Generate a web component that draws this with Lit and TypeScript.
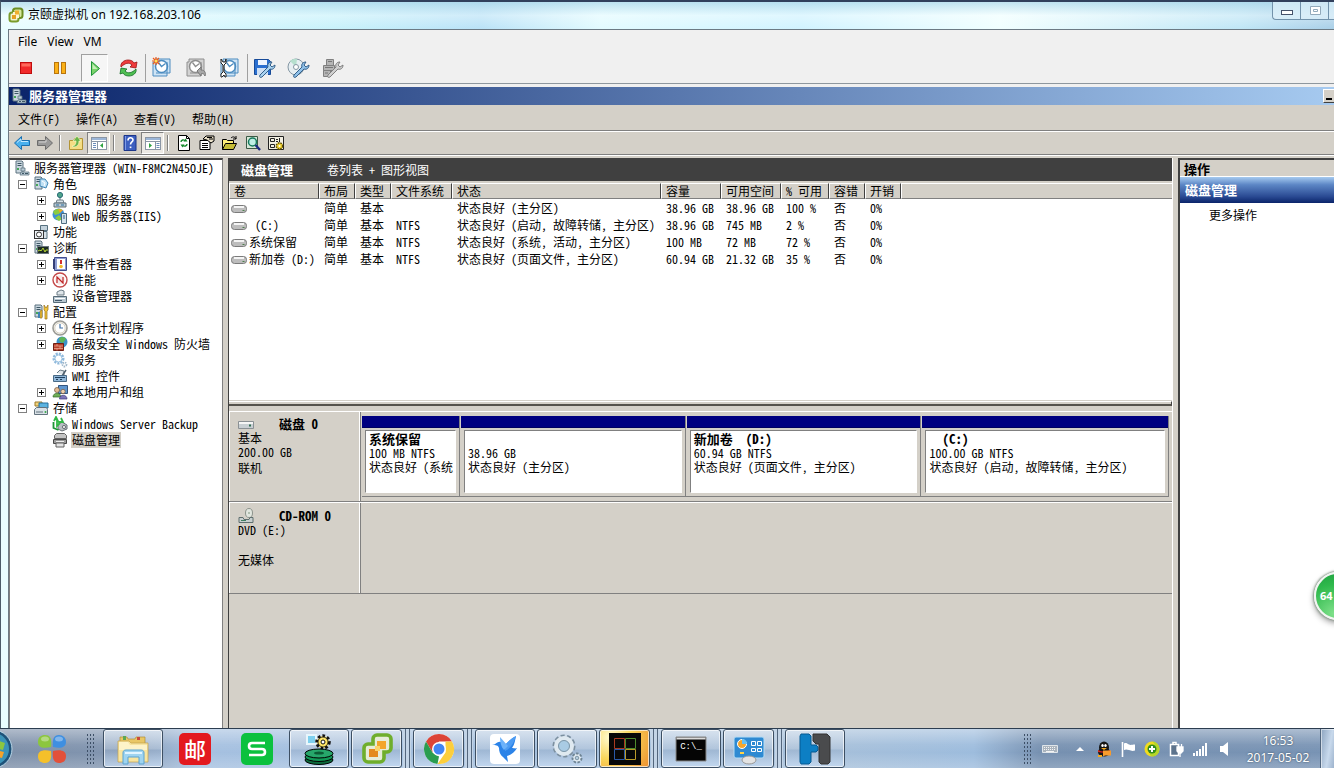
import { LitElement, html, css, svg, nothing, type TemplateResult } from "lit";
import { customElement, property } from "lit/decorators.js";
import { classMap } from "lit/directives/class-map.js";
import { styleMap } from "lit/directives/style-map.js";

/* ---------- icon library: [viewBox size, drawing] ---------- */
const serverTower = svg`<path d="M2 1h6l1 1v11H2z" fill="#c9d6de" stroke="#5d7380"/><path d="M3.500 3.500h4M3.500 5.500h4" stroke="#3f5866"/><rect x="3" y="8" width="2" height="2" fill="#46a758"/>`;
const vmSnap = (c: string, f: string) => svg`<path d="M5 3h15v14h-3v3H3V6h2z" fill="${f}" stroke="${c}"/><circle cx="11.500" cy="10.500" r="6" fill="#fff" stroke="${c}" stroke-width="1.500"/><path d="M8.500 6.500l3 4 4-3" stroke="${c}" stroke-width="1.300" fill="none"/><path d="M17 6v11M6 17h11" stroke="${c}"/>`;
const wrench = (c: string, f: string) => svg`<path d="M8 19l8-8c-1-3 1-5 4-5l-2 3 2 2 3-2c0 3-2 5-5 4l-8 8c-2 1-3 0-2-2z" fill="${f}" stroke="${c}"/>`;

const icons: Record<string, [number, TemplateResult]> = {
  vmware: [16, svg`<rect x="5" y="1.500" width="9.500" height="9.500" rx="2.500" fill="#d7e8a0" stroke="#6c8e23" stroke-width="2"/><rect x="1.500" y="5.500" width="9" height="9" rx="2.500" fill="#eef3cf" stroke="#7b9c2c" stroke-width="2"/><path d="M5 5h6v6H5z" fill="#fff5d0"/><path d="M7 3.500h4v4H7z" fill="#efae2e"/><path d="M4 8h4v4H4z" fill="#e5a023"/>`],
  stop: [24, svg`<rect x="6.500" y="6.500" width="11" height="11" fill="#f12a2a" stroke="#c00d0d"/><path d="M7.500 7.500h9v3h-9z" fill="#ff6a5c"/>`],
  pause: [24, svg`<rect x="6.500" y="6.500" width="4" height="11" fill="#fbb117" stroke="#b8740c"/><rect x="13.500" y="6.500" width="4" height="11" fill="#fbb117" stroke="#b8740c"/>`],
  play: [24, svg`<path d="M8.500 5.500v14l8-7z" fill="#7ad36b" stroke="#1d9436"/><path d="M9.500 8v5h5z" fill="#c5f0b8"/>`],
  reset: [24, svg`<path d="M5 11c-1-4 3-7 7-7 3 0 5 1 6 3l3-1-1 6-6-1 2-2c-3-3-7-2-11 2z" fill="#ef3b3b" stroke="#9c1414" stroke-width=".8"/><path d="M20 13c1 4-3 7-7 7-3 0-5-1-6-3l-3 1 1-6 6 1-2 2c3 3 7 2 11-2z" fill="#4fbf52" stroke="#136d24" stroke-width=".8"/>`],
  snapTake: [24, svg`${vmSnap("#4c8cc0", "#cfe4f5")}<path d="M6 1v8M2 5h8M3 2l6 6M9 2L3 8" stroke="#f05a1a" stroke-width="1.200"/><circle cx="6" cy="5" r="1.500" fill="#ffe25a"/>`],
  snapRevert: [24, svg`${vmSnap("#8e8e8e", "#d3d3d3")}<path d="M13 15l4-4v3c4 0 5 3 4 6-1-2-2-3-4-2v2z" fill="#a8a8a8" stroke="#777"/>`],
  snapManage: [24, svg`${vmSnap("#4c8cc0", "#cfe4f5")}<path d="M3 3v4l2 2v7l-2 2v3h1l2-2 1 2h1v-3l-2-2V9l2-2V3L7 6H5z" fill="#fff" stroke="#222"/>`],
  floppy: [24, svg`<path d="M2.500 3.500h14l2 2v13h-16z" fill="#2a6fd0" stroke="#174a98"/><path d="M6 4h9v5H6z" fill="#eef5ff"/><path d="M5 12h11v7H5z" fill="#cfe0f4"/>${wrench("#34608a", "#a9d2f0")}`],
  disc: [24, svg`<circle cx="10" cy="11" r="8" fill="#e6eef2" stroke="#8496a3"/><path d="M10 11L4 5a8 8 0 0 1 7-2z" fill="#b6dfce"/><circle cx="10" cy="11" r="2.500" fill="#fff" stroke="#8496a3"/>${wrench("#34608a", "#8fc0e8")}`],
  device: [24, svg`<path d="M6.500 3.500h7v6h-7zM3.500 9.500h11v5h-11zM3.500 14.500h7v6h-7z" fill="#b5b5b5" stroke="#808080"/><path d="M8 5.500h4M5 11.500h8M5 17h3" stroke="#777"/>${wrench("#808080", "#d0d0d0")}`],
  server: [16, svg`${serverTower}<path d="M7 8h4v3H7zM7 12h8v3H6z" fill="#b9cbd6" stroke="#5d7380" stroke-width=".8"/><path d="M8 13.500h2M11 13.500h3" stroke="#3f5866"/>`],
  roles: [16, svg`${serverTower}<path d="M7 3h5l3 4-2 5-6-2z" fill="#bfe0f4" stroke="#3f86b5"/><path d="M9 5l3 2-1 3" stroke="#fff" fill="none"/>`],
  dns: [16, svg`<circle cx="8" cy="3" r="2.600" fill="#4fa58b" stroke="#2b6d77"/><path d="M8 6v4" stroke="#467" /><path d="M5 8h6l1 3H4z" fill="#d6e1e7" stroke="#71828c"/><path d="M2 11h12v4H2z" fill="#b8c9d3" stroke="#5b6c77"/><path d="M4 13h3M9 13h3" stroke="#2d6e9f"/>`],
  web: [16, svg`<circle cx="6.500" cy="6.500" r="6" fill="#3c8fd6"/><path d="M1 4c2-4 8-4 9-2L7 6 3 7zM3 10l4-3 3 4-3 2z" fill="#8ccb3f"/><path d="M6 1l5 1-3 3z" fill="#f5a623"/><path d="M9.500 5.500h5v10h-5z" fill="#d3e1ea" stroke="#4c6b80"/><path d="M11 8h2M11 10h2" stroke="#28638c"/>`],
  feature: [16, svg`<path d="M7.500 1.500h7v5h-7z" fill="#c3d2dc" stroke="#56707f"/><path d="M8 7.500h6v7H8z" fill="#d8e2e8" stroke="#56707f"/><rect x="1.500" y="6.500" width="9" height="8" fill="#eef3f6" stroke="#333"/><circle cx="6" cy="10.500" r="2.500" fill="#fff" stroke="#333"/>`],
  diag: [16, svg`${serverTower}<rect x="4.500" y="6.500" width="11" height="7" fill="#1c2b22" stroke="#69757c"/><path d="M5 11l2-1 1 1 2-3 2 4 1-2h2" fill="none" stroke="#b8d635"/>`],
  event: [16, svg`<path d="M2.500 1.500h12v13h-12z" fill="#8e9cd2" stroke="#424d8e"/><path d="M5 3h8v10H5z" fill="#fff"/><path d="M9 4v4" stroke="#d43131" stroke-width="2"/><circle cx="9" cy="10.500" r="1.800" fill="#f4b92c"/><path d="M2 3v10" stroke="#353f77" stroke-width="2"/>`],
  perf: [16, svg`<circle cx="8" cy="8" r="7" fill="#fff" stroke="#c44848" stroke-width="1.400"/><circle cx="8" cy="8" r="4.800" fill="#f7e7e7"/><path d="M5 11V5l6 6V5" stroke="#bf2525" stroke-width="1.200" fill="none"/>`],
  devmgr: [16, svg`<path d="M5 4l4-2 3 1v4H5z" fill="#dfe6ea" stroke="#6d7c86"/><path d="M1.500 8.500h13v6h-13z" fill="#b7c6d0" stroke="#596c78"/><path d="M3 10.500h10" stroke="#fff"/><path d="M3 12.500h7" stroke="#44596a"/>`],
  config: [16, svg`${serverTower}<path d="M7 7l2-1v8H7zM11 1v5l1 1v8h2V7l1-1V1l-2 3z" fill="#f4c63b" stroke="#96701a" stroke-width=".7"/><path d="M6 8v6" stroke="#3e83b4" stroke-width="2"/>`],
  clock: [16, svg`<circle cx="8" cy="8" r="7" fill="#f6f6f3" stroke="#9a9a95" stroke-width="1.600"/><circle cx="8" cy="8" r="5.200" fill="#fff" stroke="#d8d2c2"/><path d="M8 4v4h3" fill="none" stroke="#3c6ea5" stroke-width="1.200"/>`],
  firewall: [16, svg`<circle cx="10" cy="6" r="5.500" fill="#3c92c8"/><path d="M7 3c2-3 6-2 7 0l-3 4-3-1z" fill="#5fb457"/><path d="M1.500 7.500h10v7h-10z" fill="#b9402c" stroke="#6f1f14"/><path d="M2 10h9M2 12.500h9M5 8v2M8 10v2.500M5 12.500v2" stroke="#f0b09a" stroke-width=".7"/>`],
  gears: [16, svg`<circle cx="6.500" cy="6.500" r="4.500" fill="none" stroke="#8fb9dc" stroke-width="3" stroke-dasharray="2 1"/><circle cx="6.500" cy="6.500" r="3.500" fill="#fff" stroke="#9cc3e2"/><circle cx="12.500" cy="12.500" r="2" fill="#fff" stroke="#9fb6c9" stroke-width="1.800" stroke-dasharray="1.400 .8"/>`],
  wmi: [16, svg`<path d="M5 5l3-3 4 1v4" fill="#dfe6ea" stroke="#687984"/><path d="M10 8l4-6" stroke="#4e5f6d" stroke-width="1.500"/><path d="M1.500 7.500h13v6h-13z" fill="#8fb6d8" stroke="#496a86"/><path d="M3 9.500h10M4 11.500h2M8 11.500h2" stroke="#1f3f5e"/>`],
  users: [16, svg`<path d="M6.500 1.500h9v8h-9z" fill="#5f96cf" stroke="#34557e"/><circle cx="5" cy="6" r="2.500" fill="#e6bd94" stroke="#70543b" stroke-width=".7"/><path d="M1 13c0-5 8-5 8 0z" fill="#6fae56" stroke="#356527" stroke-width=".7"/><circle cx="11" cy="7.500" r="2.200" fill="#efd0ad" stroke="#70543b" stroke-width=".7"/><path d="M7.500 15c0-5 7.500-5 7.500 0z" fill="#7c74b8" stroke="#3f3878" stroke-width=".7"/>`],
  storage: [16, svg`<path d="M2 2h7v4H2z" fill="#f1d27a" stroke="#9c7a2a"/><path d="M6 3h9v5H6z" fill="#5bb3e0" stroke="#25719e"/><path d="M1.500 9.500l2-2h10l1 2v5h-13z" fill="#d9e1e6" stroke="#63737e"/><path d="M3 12h7" stroke="#63737e"/><circle cx="12.500" cy="12" r="1" fill="#37a848"/>`],
  backup: [16, svg`<path d="M6 9l4-3 5 3v4l-5 2-4-2z" fill="#b9bec3" stroke="#6b7278"/><circle cx="12" cy="11" r="1.600" fill="#eee" stroke="#6b7278"/><path d="M2 5l2-4 2 4H5v5l2-2V6h4L9 2" fill="none" stroke="#31b745" stroke-width="1.800"/><path d="M1.500 6v6l5 2" fill="none" stroke="#1d9636" stroke-width="1.800"/>`],
  diskmgr: [16, svg`<path d="M2.500 3.500l2-2h8l2 2v3h-12z" fill="#c4c4c4" stroke="#636363"/><path d="M1.500 7.500h13v4h-13z" fill="#9c9c9c" stroke="#4b4b4b"/><path d="M4 11h8v4H4z" fill="#e5e5e5" stroke="#636363"/><path d="M4 9.500h8" stroke="#eee"/>`],
  volume: [16, svg`<rect x=".5" y="5.500" width="15" height="7" rx="3" fill="#bdbdbd" stroke="#7b7b7b"/><path d="M3 7h10" stroke="#f4f4f4" stroke-width="2"/><path d="M11.500 10.500h2" stroke="#4d7f4d"/>`],
  hdd: [16, svg`<path d="M.500 5.500h15v7H.500z" fill="#c8cfd3" stroke="#8a9094"/><path d="M1 7h14" stroke="#f6f6f6" stroke-width="2"/><path d="M11 8.500h2v2h-2z" fill="#2f6d50"/>`],
  cdrom: [16, svg`<ellipse cx="11" cy="5" rx="3.500" ry="4.500" fill="#e1e6df" stroke="#8c938c"/><circle cx="11" cy="5" r="1" fill="#9fb09f"/><path d="M1 9.500h4l1 2h5l1-2h3v5H1z" fill="#c7cfcf" stroke="#5f6f6f"/><path d="M3 12.500h5" stroke="#3f7e60"/>`],
  back: [18, svg`<path d="M1.500 9l7-6.500v4h8v5h-8v4z" fill="#49b0ee" stroke="#1b6fae"/><path d="M4 8.500l4-3.500v2.500h7" fill="none" stroke="#c2e8ff"/>`],
  forward: [18, svg`<path d="M16.500 9l-7-6.500v4h-8v5h8v4z" fill="#9a9a9a" stroke="#6c6c6c"/><path d="M3 8h7V5.500" fill="none" stroke="#d3d3d3"/>`],
  folderUp: [18, svg`<path d="M2.500 6.500h4l1-2h8v11h-13z" fill="#f5dd83" stroke="#b39434"/><path d="M5 12c3 0 4-2 4-5H6l4-5 4 5h-2c0 4-2 6-6 6z" fill="#68b44a" stroke="#f7f7c4" stroke-width=".7"/>`],
  paneLeft: [18, svg`<rect x="1.500" y="3.500" width="15" height="12" fill="#fff" stroke="#8b96a5"/><path d="M2 4h14v2H2z" fill="#9cb6d8"/><path d="M2 7.500h15M7.500 8v7" stroke="#8b96a5"/><path d="M3 9.500h3M3 11.500h3M3 13.500h3" stroke="#6b8cba"/><path d="M13 9v5l-3-2.500z" fill="#2fa342"/>`],
  paneRight: [18, svg`<rect x="1.500" y="3.500" width="15" height="12" fill="#fff" stroke="#8b96a5"/><path d="M2 4h14v2H2z" fill="#9cb6d8"/><path d="M2 7.500h15M11.500 8v7" stroke="#8b96a5"/><path d="M12.500 9.500h3M12.500 11.500h3M12.500 13.500h3" stroke="#6b8cba"/><path d="M5 9v5l3-2.500z" fill="#2fa342"/>`],
  help: [18, svg`<path d="M3 1.500h12v15H3z" fill="#3c5fc0" stroke="#1d3689"/><path d="M4.500 2v14" stroke="#7f9be6"/><path d="M7 6.500c0-3.500 5-3.500 5-.5 0 2-2.500 2-2.500 4.500" fill="none" stroke="#fff" stroke-width="1.600"/><path d="M8.700 12.500h1.700v1.600H8.700z" fill="#fff"/>`],
  refresh: [18, svg`<path d="M3.500 1.500h8l3 3v12h-11z" fill="#fff" stroke="#000"/><path d="M11.500 1.500v3h3" fill="none" stroke="#000"/><path d="M6 8c0-2 3-3 4-1M12 10c0 2-3 3-4 1" fill="none" stroke="#168a2d" stroke-width="1.400"/><path d="M8.500 7.500h4L10.500 4.500zM9.500 10.500h-4l2 3z" fill="#168a2d"/>`],
  props: [18, svg`<path d="M2 6.500h10v9H2z" fill="#fff" stroke="#000"/><path d="M4 9.500h6M4 11.500h6M4 13.500h6" stroke="#000"/><path d="M5 5l3-3h8v5l-3 2-4-3z" fill="#e9e0c8" stroke="#000"/><path d="M9 3.500h5M11 5h4" stroke="#000"/>`],
  open: [18, svg`<path d="M1.500 15.500v-10h4l1 1h6v3" fill="#ffef7a" stroke="#000"/><path d="M1.500 15.500l3-6h11l-3 6z" fill="#c6bd36" stroke="#000"/><path d="M10 4c2-2 4-1 5 1m0-3v3h-3" fill="none" stroke="#000"/>`],
  search: [18, svg`<path d="M2.500 2.500h11v12h-11z" fill="#d6e7d8" stroke="#3b5945"/><circle cx="8.500" cy="8" r="4" fill="#bfeee6" stroke="#157a5c" stroke-width="1.500"/><path d="M11.500 11l4.500 5" stroke="#1b2a80" stroke-width="2.400"/>`],
  settings: [18, svg`<path d="M1.500 2.500h15v13h-15z" fill="#f2efe2" stroke="#222"/><path d="M3.500 4.500h4v3h-4zM3.500 10.500h4v3h-4z" fill="none" stroke="#222"/><path d="M9 5.500h2M9 7.500h2M12.500 4v4" stroke="#222"/><circle cx="12.500" cy="12" r="3.200" fill="#f0d22e" stroke="#5b4c06" stroke-width="1.500" stroke-dasharray="1.600 1"/><circle cx="12.500" cy="12" r="1" fill="#fff"/>`],
  pinwheel: [32, svg`<path d="M2 9c0-5 3-7 7-7 5 0 7 3 6 12C6 16 2 14 2 9z" fill="#8cc63f"/><path d="M30 9c0-4-3-7-7-7-5 0-7 4-6 12 8 2 13 0 13-5z" fill="#3f8fe0"/><path d="M2 23c0 5 3 7 7 7 5 0 7-4 6-12C7 16 2 18 2 23z" fill="#f5c02a"/><path d="M30 23c0 5-3 7-7 7-5 0-7-4-6-12 8-2 13 0 13 5z" fill="#e2503a"/><ellipse cx="9" cy="6" rx="4" ry="2.500" fill="#fff" opacity=".35"/><ellipse cx="23" cy="6" rx="4" ry="2.500" fill="#fff" opacity=".35"/>`],
  explorer: [32, svg`<path d="M3 4h7l1 2h7l1-2h9v18H3z" fill="#e9c765" stroke="#b18f36" stroke-width=".7"/><path d="M6 3h3v4H6z" fill="#5ba755"/><path d="M20 4h3v3h-3z" fill="#cc4a3a"/><path d="M1 8h11l2 2h17v19H1z" fill="#f8e5a0" stroke="#c3a24c" stroke-width=".7"/><path d="M2 9h9l2 3h17v5H2z" fill="#fdf3c8"/><path d="M6 20c0-2 1-3 3-3h15c2 0 3 1 3 3v11h-5v-7H11v7H6z" fill="#9fd4f0" stroke="#5ba3d0"/><path d="M8 19h17v2H8z" fill="#e2f5ff"/>`],
  wps: [32, svg`<rect width="32" height="32" rx="5" fill="#0bc13e"/><path d="M24 10H11c-2 0-3 1-3 3s1 3 3 3h10c2 0 3 1 3 3s-1 3-3 3H8" fill="none" stroke="#fff" stroke-width="2.600"/>`],
  mail: [32, svg`<rect width="32" height="32" rx="5" fill="#e3191f"/>`],
  servmgr: [32, svg`<path d="M4 2h9v9H4z" fill="#7fd0ee" stroke="#e8f6fc" stroke-width="2"/><circle cx="20" cy="9" r="6" fill="#ffe566" stroke="#111" stroke-width="3.500" stroke-dasharray="2.500 2"/><circle cx="20" cy="9" r="5" fill="#ffe566" stroke="#111" stroke-width=".8"/><circle cx="20" cy="9" r="2" fill="#fff" stroke="#111"/><ellipse cx="16" cy="27" rx="14" ry="4.500" fill="#0c6b3d" stroke="#000"/><ellipse cx="16" cy="24" rx="14" ry="4.500" fill="#119957" stroke="#000"/><ellipse cx="16" cy="20.500" rx="14" ry="4.500" fill="#27a76b" stroke="#000"/><ellipse cx="16" cy="20" rx="5" ry="1.600" fill="#0b5c35"/>`],
  vsphere: [32, svg`<path d="M12 6a4 4 0 0 1 4-4h10a4 4 0 0 1 4 4v9a4 4 0 0 1-4 4h-3v6a4 4 0 0 1-4 4H7a4 4 0 0 1-4-4V15a4 4 0 0 1 4-4h5z" fill="#e6ecd8" stroke="#6fae2c" stroke-width="3.600" /><path d="M16 8h9v8h-9z" fill="#f3a52c"/><path d="M8 16h9v8H8z" fill="#e48a1e"/><path d="M14 13h5v5h-5z" fill="#fbd36b"/>`],
  chrome: [32, svg`<circle cx="16" cy="16" r="15" fill="#fff"/><path d="M16 1a15 15 0 0 1 13 7.500H16l-6.500 11L3 8.500A15 15 0 0 1 16 1z" fill="#dc4437"/><path d="M3 8.500l6.500 11L16 23.500 14.500 31A15 15 0 0 1 3 8.500z" fill="#2a9d50"/><path d="M29 8.500A15 15 0 0 1 14.500 31l8-11.500V8.500z" fill="#fcce3c"/><circle cx="16" cy="16" r="7" fill="#fff"/><circle cx="16" cy="16" r="5.500" fill="#4285f4"/>`],
  bird: [32, svg`<rect x="1" y="1" width="30" height="30" rx="4" fill="#fff"/><path d="M3 12c4 0 5-4 9-3l4 3c3-3 5-6 11-9-1 4-1 8-4 12 2 0 3 1 5 0-2 4-6 7-10 8l1 6-5-5c-3-2-4-6-4-9-1-3-3-3-7-3z" fill="#2b83e8"/><path d="M16 12c3-3 5-6 11-9-2 7-5 12-11 15z" fill="#4d9cf3"/><path d="M11 4l8 9-4 4c-3-3-4-8-4-13z" fill="#6cb2fa"/>`],
  cogs: [32, svg`<circle cx="13" cy="13" r="9" fill="none" stroke="#7b8f9f" stroke-width="5" stroke-dasharray="3.500 2.100"/><circle cx="13" cy="13" r="8" fill="#c6dcea" stroke="#dfe9f0" stroke-width="4"/><circle cx="13" cy="13" r="5.500" fill="#a9cbe4" stroke="#7c95a7"/><circle cx="26" cy="25" r="4" fill="#e4edf3" stroke="#6f8595" stroke-width="3" stroke-dasharray="2.200 1.300"/><circle cx="26" cy="25" r="3.500" fill="#e4edf3"/><circle cx="26" cy="25" r="1.800" fill="#b6cede" stroke="#7c95a7"/>`],
  blackWin: [32, svg`<path d="M0 0h32v32H0z" fill="#080808"/><path d="M5.500 5.500h10v10h-10z" fill="none" stroke="#a93a22"/><path d="M16.500 5.500h10v10h-10z" fill="none" stroke="#4d8a2c"/><path d="M5.500 16.500h10v10h-10z" fill="none" stroke="#2a5aa8"/><path d="M16.500 16.500h10v10h-10z" fill="none" stroke="#b99a2a"/>`],
  cmd: [32, svg`<path d="M1 4h30v24H1z" fill="#050505" stroke="#888"/><path d="M1.500 4.500h29v2h-29z" fill="#dcdcdc"/>`],
  panel: [32, svg`<rect x="1" y="4" width="30" height="21" rx="2" fill="#2e8ad2" stroke="#b4dcf5"/><circle cx="9" cy="11" r="4.500" fill="#f5a62c" stroke="#fff"/><path d="M9 11V6a5 5 0 0 1 5 5z" fill="#64c0f2"/><path d="M18.500 8.500h4v4h-4zM24.500 8.500h4v4h-4zM18.500 15.500h4v3h-4zM24.500 15.500h4v3h-4z" fill="none" stroke="#fff"/><path d="M7 20h4" stroke="#ffd447" stroke-width="2"/><ellipse cx="16" cy="27" rx="7" ry="4" fill="#e3e3e3" stroke="#989898"/>`],
  hlogo: [32, svg`<path d="M2 1h8l2 2v9h5l2 2v3l-2 2h-5v10l-2 2H2l-1-2V3z" fill="#0d7fc4" stroke="#075a92"/><path d="M14 1h14l3 3v25l-2 2h-7l-2-2V11h-3l-3-3z" fill="#4a4b4d" stroke="#333"/>`],
  keyboard: [16, svg`<path d="M.500 4.500h15v7H.500z" fill="#aab4be" stroke="#dfe5ea"/><path d="M2 6.500h12M2 8.500h12" stroke="#f4f4f4" stroke-dasharray="1 1"/><path d="M4 10.500h8" stroke="#f4f4f4"/>`],
  caret: [16, svg`<path d="M8 6l4 4H4z" fill="#fff"/>`],
  qq: [16, svg`<ellipse cx="8" cy="6.500" rx="5" ry="6" fill="#161616"/><ellipse cx="8" cy="11" rx="6" ry="4.500" fill="#161616"/><ellipse cx="6.500" cy="4.500" rx="1.200" ry="1.600" fill="#fff"/><ellipse cx="9.500" cy="4.500" rx="1.200" ry="1.600" fill="#fff"/><path d="M5 7h6l-3 2z" fill="#f6a91c"/><path d="M2 9c4 2 8 2 12 0v2c-4 1-8 1-12 0z" fill="#d9251c"/><path d="M7 9.500h8v5H9l-2 1z" fill="#f79b2d"/><path d="M2 14h4v2H2z" fill="#f6a91c"/>`],
  flag: [16, svg`<path d="M2.500 1v15" stroke="#fff" stroke-width="1.600"/><path d="M4 2.500c2-1 3 0 5 1s3 0 6 0v6c-3 1-4 0-6-.5S6 8 4 9z" fill="#fff"/>`],
  shield: [16, svg`<circle cx="8" cy="8" r="7.500" fill="#f0dc1e"/><path d="M8 .500A7.500 7.500 0 0 1 8 15.500 4 4 0 0 1 8 8a4 4 0 0 0 0-7.500z" fill="#b5d62a"/><circle cx="8" cy="8" r="4.500" fill="#2f8a1e"/><path d="M8 5v6M5 8h6" stroke="#fff" stroke-width="2"/>`],
  power: [16, svg`<path d="M2.500 3.500h8v11h-8zM5 1.500h3v2H5z" fill="#5d738c" stroke="#fff" stroke-width="1.500"/><path d="M9 6h6v4l-2 2h-2l-2-2zM10.500 3v3M13.500 3v3M12 12v4" fill="#fff" stroke="#fff" stroke-width="1.300"/>`],
  signal: [16, svg`<path d="M1 12h2v3H1zM4 10h2v5H4zM7 8h2v7H7zM10 5h2v10h-2zM13 2h2v13h-2z" fill="#fff"/>`],
  speaker: [16, svg`<path d="M4 5h3l5-4v14l-5-4H4z" fill="#fff"/>`],
};

@customElement("ui-icon")
export class UiIcon extends LitElement {
  static styles = css`
    :host { display: inline-block; flex: none; width: 16px; height: 16px; }
    :host([size="18"]) { width: 18px; height: 18px; }
    :host([size="24"]) { width: 24px; height: 24px; }
    :host([size="32"]) { width: 32px; height: 32px; }
    svg { display: block; width: 100%; height: 100%; }
  `;
  @property() name = "";
  @property({ reflect: true }) size = "16";
  render() {
    const [box, art] = icons[this.name];
    return html`<svg viewBox="0 0 ${box} ${box}" fill="none" aria-hidden="true">${art}</svg>`;
  }
}

/* ---------- data ---------- */
type Node = [level: number, state: "" | "+" | "-", icon: string, label: string];
const tree: Node[] = [
  [0, "", "server", "服务器管理器 (WIN-F8MC2N45OJE)"],
  [1, "-", "roles", "角色"],
  [2, "+", "dns", "DNS 服务器"],
  [2, "+", "web", "Web 服务器(IIS)"],
  [1, "", "feature", "功能"],
  [1, "-", "diag", "诊断"],
  [2, "+", "event", "事件查看器"],
  [2, "+", "perf", "性能"],
  [2, "", "devmgr", "设备管理器"],
  [1, "-", "config", "配置"],
  [2, "+", "clock", "任务计划程序"],
  [2, "+", "firewall", "高级安全 Windows 防火墙"],
  [2, "", "gears", "服务"],
  [2, "", "wmi", "WMI 控件"],
  [2, "+", "users", "本地用户和组"],
  [1, "-", "storage", "存储"],
  [2, "", "backup", "Windows Server Backup"],
  [2, "", "diskmgr", "磁盘管理"],
];
const columns = ["卷", "布局", "类型", "文件系统", "状态", "容量", "可用空间", "% 可用", "容错", "开销", ""];
const volumes = [
  ["", "简单", "基本", "", "状态良好 (主分区)", "38.96 GB", "38.96 GB", "100 %", "否", "0%", ""],
  [" (C:)", "简单", "基本", "NTFS", "状态良好 (启动, 故障转储, 主分区)", "38.96 GB", "745 MB", "2 %", "否", "0%", ""],
  ["系统保留", "简单", "基本", "NTFS", "状态良好 (系统, 活动, 主分区)", "100 MB", "72 MB", "72 %", "否", "0%", ""],
  ["新加卷 (D:)", "简单", "基本", "NTFS", "状态良好 (页面文件, 主分区)", "60.94 GB", "21.32 GB", "35 %", "否", "0%", ""],
];
const partitions = [
  { share: 98, name: "系统保留", size: "100 MB NTFS", status: "状态良好 (系统" },
  { share: 226, name: "", size: "38.96 GB", status: "状态良好 (主分区)" },
  { share: 236, name: "新加卷  (D:)", size: "60.94 GB NTFS", status: "状态良好 (页面文件, 主分区)" },
  { share: 248, name: "  (C:)", size: "100.00 GB NTFS", status: "状态良好 (启动, 故障转储, 主分区)" },
];
const vmTools: [string, string, string][] = [
  ["stop", "Power Off", ""], ["pause", "Suspend", ""], ["play", "Power On", "on"], ["reset", "Reset", ""],
  ["snapTake", "Take Snapshot", "cut"], ["snapRevert", "Revert Snapshot", ""], ["snapManage", "Manage Snapshots", ""],
  ["floppy", "Floppy", "cut"], ["disc", "CD/DVD", ""], ["device", "Devices", ""],
];
const mmcTools: [string, string, boolean?][] = [
  ["back", "后退"], ["forward", "前进"], ["|", ""], ["folderUp", "向上"], ["paneLeft", "控制台树", true], ["|", ""],
  ["help", "帮助"], ["paneRight", "操作窗格", true], ["|", ""], ["refresh", "刷新"], ["props", "属性"], ["open", "打开"],
  ["search", "查找"], ["settings", "设置"],
];
const tasks: [string, string, string][] = [
  ["explorer", "资源管理器", "run"], ["mail", "邮", "pin"], ["wps", "WPS", "pin"], ["servmgr", "服务器", "run"],
  ["vsphere", "vSphere", "run stack"], ["chrome", "Chrome", "run stack"], ["bird", "迅雷", "run"], ["cogs", "服务", "run"],
  ["blackWin", "窗口", "run stack hot"], ["cmd", "C:\\_", "run"], ["panel", "控制面板", "run stack"], ["hlogo", "H", "run"],
];
const tray = ["keyboard", "caret", "qq", "flag", "shield", "power", "signal", "speaker"];

/* ---------- Windows 7 taskbar ---------- */
@customElement("task-bar")
export class TaskBar extends LitElement {
  static styles = css`
    :host {
      display: flex; flex: none; height: 40px; box-sizing: border-box; position: relative; overflow: hidden;
      border-top: 1px solid #2c3d50;
      background: linear-gradient(180deg, #ffffff66 0, #ffffff11 40%, #ffffff00 60%, #ffffff33 100%),
        linear-gradient(90deg, #7d8fa8 0, #8195b0 9%, #a5c0e0 15%, #a3bfdf 30%, #a5bfda 63%, #9dbcdd 73%, #7690b0 78%, #7893b4 100%);
      font: 12px/16px "Noto Sans", "Noto Sans CJK SC", sans-serif;
    }
    button { border: 0; margin: 0; padding: 0; background: none; font: inherit; display: flex; align-items: center; justify-content: center; }
    .orb { width: 36px; justify-content: flex-start; }
    .orb svg { width: 13px; height: 38px; }
    .pin-app { width: 32px; }
    .grip { width: 8px; margin: 4px 0; background: radial-gradient(circle, #3d4f66 1px, transparent 1px) 0 0 / 3px 4px; }
    .grip.left { margin-left: 18px; margin-right: 9px; }
    .grip.right { margin-right: 11px; }
    .tasks { display: flex; gap: 2px; flex: 1; }
    .task { width: 60px; flex: none; position: relative; }
    .face { display: flex; flex: 1; align-self: stretch; align-items: center; justify-content: center; border-radius: 3px; box-sizing: border-box; }
    .run .face { border: 1px solid #3d4f63; box-shadow: inset 0 0 0 1px #ffffffaa;
      background: linear-gradient(180deg, #dbe5f0cc, #b9c9dc99 50%, #9bb1cc88 55%, #c5daf2cc); }
    .hot .face { background: radial-gradient(circle at 20% 20%, #fffbd0, #f9d558 45%, #ee8f2e); }
    .stack::after { content: ""; width: 8px; align-self: stretch; margin-left: 1px;
      background: repeating-linear-gradient(90deg, #c3d4e6 0 2px, #53667d 2px 3px, #c3d4e6 3px 4px); }
    .glyph { position: absolute; color: #fff; line-height: 24px; font-size: 22px; font-weight: 500; }
    .glyph.prompt { font: 9px/12px "Liberation Mono", monospace; padding-bottom: 4px; }
    .tray { display: flex; align-items: center; gap: 8px; }
    .tray .wide { margin-right: 6px; }
    .clock { width: 88px; padding-left: 4px; box-sizing: border-box; display: flex; flex-direction: column; justify-content: center; text-align: center; color: #fff; text-shadow: 0 0 2px #345; }
    .clock time { display: block; line-height: 17px; }
    .show { width: 14px; border-left: 1px solid #50657e; background: linear-gradient(100deg, #8ba3bf, #c8d9ec 60%, #9db3cd); box-shadow: inset 1px 1px 0 #ffffff88; }
  `;
  render() {
    return html`
      <button class="orb" aria-label="开始">
        <svg viewBox="0 0 13 38" aria-hidden="true"><circle cx="-7" cy="19" r="19" fill="#1e5279" stroke="#b9d7e8"/><circle cx="-7" cy="19" r="16" fill="#3b93b8"/><path d="M-4 10l9 3-2 7-8-2z" fill="#8cc63f"/><path d="M-4 20l8 2-2 6-8-2z" fill="#f6a32a"/></svg>
      </button>
      <button class="pin-app" aria-label="pinwheel"><ui-icon name="pinwheel" size="32"></ui-icon></button>
      <div class="grip left"></div>
      <nav class="tasks">
        ${tasks.map(([icon, label, kind]) => html`
          <button class="task ${kind}" aria-label=${label}>
            <span class="face"><ui-icon name=${icon} size="32"></ui-icon></span>
            ${icon === "mail" ? html`<span class="glyph">邮</span>` : nothing}
            ${icon === "cmd" ? html`<span class="glyph prompt">C:\\_</span>` : nothing}
          </button>`)}
      </nav>
      <div class="grip right"></div>
      <div class="tray">${tray.map((t) => html`<ui-icon class=${classMap({ wide: t === "keyboard" })} name=${t}></ui-icon>`)}</div>
      <div class="clock"><time>16:53</time><time>2017-05-02</time></div>
      <button class="show" aria-label="显示桌面"></button>
    `;
  }
}

/* ---------- whole desktop ---------- */
@customElement("app-root")
export class AppRoot extends LitElement {
  static styles = css`
    :host {
      display: flex; flex-direction: column; height: 100vh; min-height: 480px; overflow: hidden; position: relative;
      color: #000; background: #fff;
      font: 12px/16px "Noto Sans Mono CJK SC", "Noto Sans CJK SC", "Liberation Mono", monospace;
    }
    * { box-sizing: border-box; }
    button { border: 0; margin: 0; padding: 0; background: none; font: inherit; color: inherit; display: flex; align-items: center; justify-content: center; }
    h1, h2, h3, p, ul { margin: 0; padding: 0; font: inherit; list-style: none; }
    .strong { font-weight: 700; font-size: 13px; }

    .client { flex: 1; min-height: 0; display: flex; flex-direction: column; border-left: 1px solid #4b5b68; border-top: 2px solid #31405c;
      background: linear-gradient(90deg, #e9fdff 0, #dcfaff 12%, #c8f2fb 25%, #b9e2f7 36%, #e2fbff 45%, #d0f3ff 60%, #f0ffff 75%, #bfe6f6 93%, #a9cfe8 100%); }
    .caption { flex: none; height: 27px; display: flex; align-items: center; gap: 4px; padding: 0 0 2px 7px; position: relative;
      font: 12px/16px "Noto Sans", "Noto Sans CJK SC", sans-serif; background: linear-gradient(180deg, #a9d5e8aa 0, #ffffff55 50%, #ffffff00); }
    .winbtns { display: flex; position: absolute; right: 0; top: 0; height: 18px; border: 1px solid #7292ab; border-top: 0; border-right: 0; border-radius: 0 0 0 4px; background: #dff2fbaa; }
    .winbtns button { width: 28px; border-right: 1px solid #7292ab; }
    .winbtns .last { width: 5px; border: 0; }
    .winbtns svg { width: 16px; height: 12px; }
    .body { flex: 1; min-height: 0; margin-left: 7px; display: flex; flex-direction: column; background: #f0f0f0; border-left: 1px solid #6c7a84; border-top: 1px solid #6c7a84; }
    .vm-menu { display: flex; height: 24px; flex: none; padding-left: 9px; gap: 10px; font: 12px/16px "Noto Sans", "Noto Sans CJK SC", sans-serif; }
    .vm-tools { display: flex; height: 30px; flex: none; border-bottom: 1px solid #8e979e; }
    .vm-tools button { width: 34px; margin-bottom: 1px; padding-right: 2px; border-left: 1px solid transparent; }
    .vm-tools .cut { border-left-color: #a0a0a0; }
    .vm-tools .on { width: 27px; margin-left: 4px; margin-right: 3px; padding: 0; border: 1px solid #a0a0a0; border-right-color: #fff; border-bottom-color: #fff; background: #f6f6f6; }

    .remote { flex: 1; min-height: 0; display: flex; flex-direction: column; margin-top: 3px; background: #d4d0c8; }
    .remote-title { flex: none; height: 18px; display: flex; align-items: center; justify-content: space-between; padding-left: 2px; color: #fff; background: linear-gradient(90deg, #0a246a, #a6caf0); }
    .remote-title h1 { display: flex; align-items: center; gap: 2px; }
    .min { align-self: flex-start; margin-top: 2px; width: 11px; height: 14px; background: #d4d0c8; border-left: 1px solid #fff; border-top: 1px solid #fff; border-bottom: 1px solid #404040; align-items: flex-end; }
    .min::after { content: ""; width: 6px; height: 2px; background: #000; margin-bottom: 2px; }
    .menu { flex: none; display: flex; height: 25px; border-bottom: 1px solid #808080; padding: 2px 9px 0; gap: 16px; margin-top: 1px; }
    .tools { flex: none; display: flex; height: 24px; border-top: 1px solid #fff; border-bottom: 1px solid #808080; padding-left: 1px; }
    .tools button { width: 23px; height: 22px; border: 1px solid transparent; }
    .tools .on { border-color: #808080 #fff #fff #808080; background: #ece9e4; }
    .tools .sep { width: 2px; margin: 3px 3px; border-left: 1px solid #808080; border-right: 1px solid #fff; }

    .panes { flex: 1; min-height: 0; display: grid; grid-template-columns: 214px minmax(0, 1fr) 156px; column-gap: 5px; padding-top: 2px; border-top: 1px solid #fff; }
    .tree { background: #fff; border: 1px solid #808080; border-top: 2px solid #404040; border-bottom: 0; overflow: hidden; }
    .node { display: flex; align-items: center; gap: 4px; height: 16px; padding-left: 4px; white-space: pre; }
    .d1 { padding-left: 8px; }
    .d2 { padding-left: 27px; }
    .twist { width: 9px; height: 9px; margin-right: 2px; flex: none; }
    .twist.box { border: 1px solid #808080; background: linear-gradient(#000, #000) center / 5px 1px no-repeat; }
    .twist.plus { background: linear-gradient(#000, #000) center / 5px 1px no-repeat, linear-gradient(#000, #000) center / 1px 5px no-repeat; }
    .picked { background: #d4d0c8; margin-left: -1px; padding: 0 1px; }

    .middle { display: flex; flex-direction: column; min-width: 0; border-left: 1px solid #404040; border-right: 1px solid #fff; }
    .banner { flex: none; display: flex; align-items: center; height: 23px; padding-left: 12px; gap: 34px; background: #404040; color: #fff; }
    .list { flex: none; height: 217px; margin-top: 2px; background: #fff; overflow: hidden; }
    table { border-collapse: separate; border-spacing: 0; table-layout: fixed; width: 100%; }
    th, td { padding: 0 0 0 5px; text-align: left; font-weight: 400; white-space: pre; overflow: hidden; }
    th { height: 16px; line-height: 14px; background: #d4d0c8; border-right: 1px solid #404040; border-bottom: 1px solid #808080; border-top: 1px solid #fff; border-left: 1px solid #fff; padding-left: 4px; }
    th:last-child { border-right: 0; }
    td { height: 17px; line-height: 16px; }
    .vol { padding-left: 2px; }
    .volume { display: flex; align-items: center; gap: 2px; }
    .c90 { width: 90px; } .c36 { width: 36px; } .c61 { width: 61px; } .c209 { width: 209px; } .c60 { width: 60px; } .c48 { width: 48px; }
    .splitter { flex: none; height: 5px; border-top: 1px solid #fff; border-bottom: 2px solid #55524c; border-right: 1px solid #404040; margin-top: 1px; }

    .disks { flex: 1; min-height: 0; padding-top: 5px; overflow: hidden; }
    .disk { display: flex; height: 91px; border-top: 1px solid #fff; border-bottom: 1px solid #808080; }
    .disk + .disk { height: 92px; }
    .info { width: 132px; flex: none; padding: 5px 0 0 8px; border-left: 1px solid #fff; border-right: 1px solid #808080; box-shadow: inset -1px 0 0 #fff; }
    .disk + .disk .info { padding-top: 6px; }
    .info-head { display: flex; align-items: center; gap: 25px; height: 14px; }
    .info p { line-height: 14px; min-height: 14px; }
    .info p + p + p { margin-top: 2px; }
    .parts { flex: 1; min-width: 0; display: flex; gap: 1px; margin: 4px 3px 4px 1px; border-bottom: 1px solid #808080; border-right: 1px solid #808080; }
    .part { flex-basis: 0; min-width: 0; display: flex; flex-direction: column; border-right: 1px solid #808080; background: #d4d0c8; }
    .part:last-child { border-right: 0; }
    .bar { height: 12px; flex: none; background: #000080; border-bottom: 1px solid #000060; }
    .cell { flex: 1; margin: 2px 3px 3px; border: 1px solid #808080; border-right-color: #fff; border-bottom-color: #fff; background: #fff; padding: 1px 0 0 3px; overflow: hidden; white-space: pre; }
    .cell p, .cell h3 { line-height: 14px; min-height: 14px; }

    .actions { background: #fff; border-left: 2px solid #404040; border-top: 2px solid #404040; }
    .actions-head { height: 17px; line-height: 17px; padding-left: 4px; background: #d4d0c8; border-bottom: 1px solid #fff; }
    .actions-group { height: 26px; line-height: 26px; padding-left: 5px; color: #fff; background: linear-gradient(180deg, #a6caf0, #5c86c5 30%, #2a4a93 75%, #0a246a); }
    .more { margin: 4px 0 0 29px; }
    .ball { position: absolute; right: -28px; bottom: 148px; width: 48px; height: 48px; border-radius: 50%; border: 2px solid #f2f5f2; box-shadow: 0 0 2px 1px #8a9a8c, 0 3px 6px #0006;
      background: radial-gradient(circle at 40% 90%, #7fe08a, #2fb94c 60%, #1c9a3e); color: #fff; font: 700 11px/44px "Noto Sans", sans-serif; justify-content: flex-start; padding-left: 4px; }
  `;

  private twist(state: string, level: number) {
    if (level === 0) return nothing;
    if (!state) return html`<span class="twist"></span>`;
    return html`<button class=${classMap({ twist: true, box: true, plus: state === "+" })} aria-label=${state === "+" ? "展开" : "折叠"}></button>`;
  }

  render() {
    return html`
      <section class="client">
        <header class="caption">
          <ui-icon name="vmware"></ui-icon><span>京颐虚拟机 on 192.168.203.106</span>
          <div class="winbtns">
            <button aria-label="最小化"><svg viewBox="0 0 16 12"><rect x="2.500" y="5.500" width="11" height="4" fill="#fff" stroke="#46536b"/></svg></button>
            <button aria-label="最大化" disabled><svg viewBox="0 0 16 12"><path d="M3.500 1.500h10v8h-10z" fill="#fff" stroke="#93aabb"/><path d="M6.500 4.500h4v2h-4z" fill="#fff" stroke="#93aabb"/></svg></button>
            <button class="last" aria-label="关闭"></button>
          </div>
        </header>
        <div class="body">
          <nav class="vm-menu">${["File", "View", "VM"].map((m) => html`<button>${m}</button>`)}</nav>
          <div class="vm-tools">${vmTools.map(([n, l, k]) => html`<button class=${k} aria-label=${l}><ui-icon name=${n} size="24"></ui-icon></button>`)}</div>
          <main class="remote">
            <div class="remote-title">
              <h1 class="strong"><ui-icon name="server"></ui-icon>服务器管理器</h1>
              <button class="min" aria-label="最小化"></button>
            </div>
            <nav class="menu">${["文件(F)", "操作(A)", "查看(V)", "帮助(H)"].map((m) => html`<button>${m}</button>`)}</nav>
            <div class="tools">${mmcTools.map(([n, l, on]) => n === "|"
              ? html`<span class="sep"></span>`
              : html`<button class=${on ? "on" : ""} aria-label=${l}><ui-icon name=${n} size="18"></ui-icon></button>`)}</div>
            <div class="panes">
              <ul class="tree">${tree.map(([level, state, icon, label]) => html`
                <li class="node d${level}">${this.twist(state, level)}<ui-icon name=${icon}></ui-icon><span class=${label === "磁盘管理" ? "picked" : ""}>${label}</span></li>`)}
              </ul>
              <section class="middle">
                <div class="banner"><h2 class="strong">磁盘管理</h2><span>卷列表 + 图形视图</span></div>
                <div class="list">
                  <table>
                    <colgroup><col class="c90"><col class="c36"><col class="c36"><col class="c61"><col class="c209"><col class="c60"><col class="c60"><col class="c48"><col class="c36"><col class="c36"><col></colgroup>
                    <thead><tr>${columns.map((c) => html`<th>${c}</th>`)}</tr></thead>
                    <tbody>${volumes.map((row) => html`<tr>${row.map((cell, i) => i === 0
                      ? html`<td class="vol"><span class="volume"><ui-icon name="volume"></ui-icon>${cell}</span></td>`
                      : html`<td>${cell}</td>`)}</tr>`)}</tbody>
                  </table>
                </div>
                <div class="splitter"></div>
                <div class="disks">
                  <article class="disk">
                    <div class="info">
                      <div class="info-head"><ui-icon name="hdd"></ui-icon><h3 class="strong">磁盘 0</h3></div>
                      <p>基本</p><p>200.00 GB</p><p>联机</p>
                    </div>
                    <div class="parts">${partitions.map((p) => html`
                      <div class="part" style=${styleMap({ flexGrow: String(p.share) })}>
                        <div class="bar"></div>
                        <div class="cell"><h3 class="strong">${p.name}</h3><p>${p.size}</p><p>${p.status}</p></div>
                      </div>`)}
                    </div>
                  </article>
                  <article class="disk">
                    <div class="info">
                      <div class="info-head"><ui-icon name="cdrom"></ui-icon><h3 class="strong">CD-ROM 0</h3></div>
                      <p>DVD (E:)</p><p></p><p>无媒体</p>
                    </div>
                  </article>
                </div>
              </section>
              <aside class="actions">
                <h2 class="actions-head strong">操作</h2>
                <h3 class="actions-group strong">磁盘管理</h3>
                <button class="more">更多操作</button>
              </aside>
            </div>
          </main>
        </div>
      </section>
      <task-bar></task-bar>
      <button class="ball" aria-label="64">64</button>
    `;
  }
}
